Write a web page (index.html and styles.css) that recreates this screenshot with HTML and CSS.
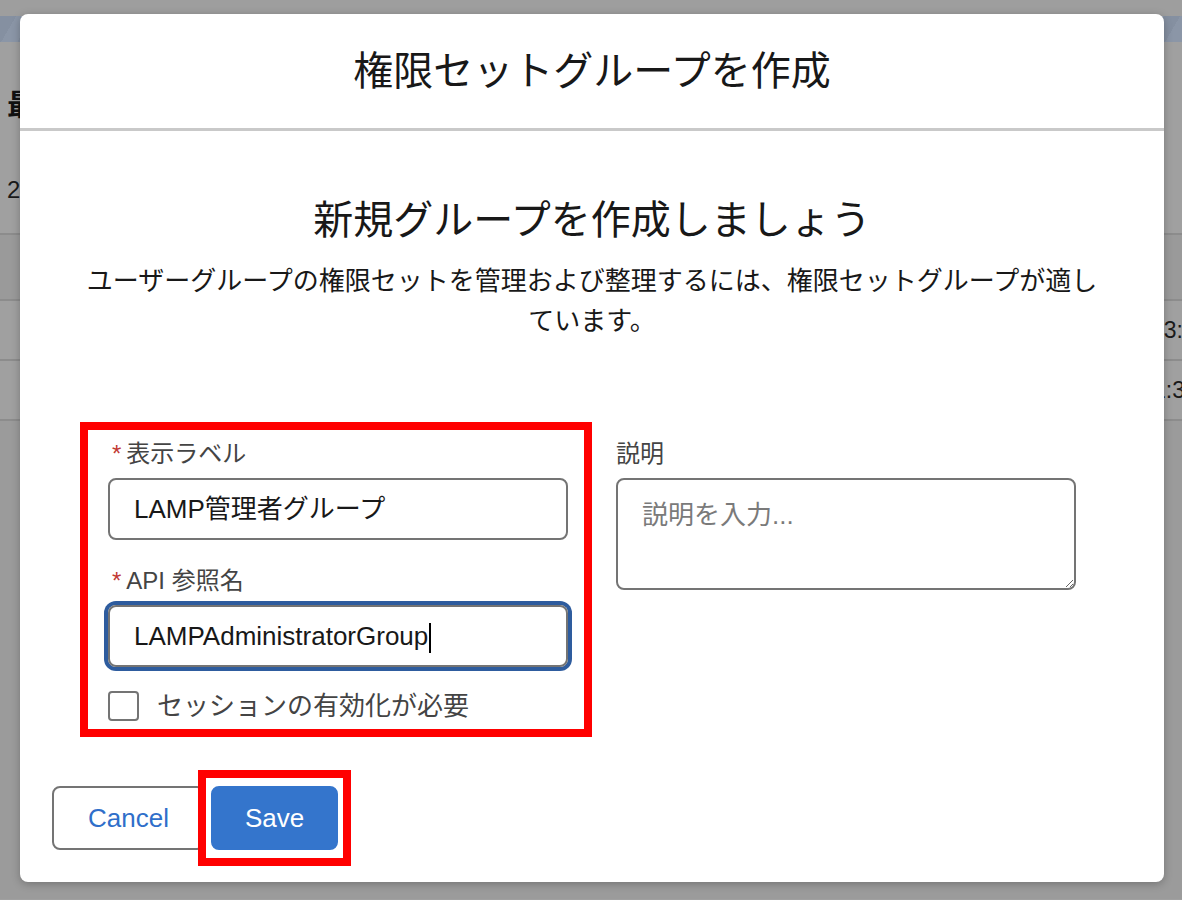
FILE: index.html
```html
<!DOCTYPE html>
<html lang="ja">
<head>
    <meta charset="UTF-8">
    <title>権限セットグループを作成</title>
    <link rel="stylesheet" href="styles.css">
</head>
<body>
    <!-- 後ろのページ (オーバーレイで暗くなっている) -->
    <div class="page">
      <div class="page-top"></div>
      <div class="page-band"></div>
      <h1 class="page-title">最近参照した権限セットグループ</h1>
      <p class="page-count">2 個の項目</p>
      <div class="page-table">
        <div class="row row-head"><span class="cell-main"></span><span class="cell-time"></span></div>
        <div class="row"><span class="cell-main"></span><span class="cell-time">13:45</span></div>
        <div class="row row-late"><span class="cell-main"></span><span class="cell-time">1:30</span></div>
        <div class="row"></div>
      </div>
    </div>

    <!-- モーダル -->
    <div class="modal">
      <header class="modal-header">
        <h2 class="modal-title">権限セットグループを作成</h2>
      </header>

      <div class="modal-body">
        <h3 class="intro-title">新規グループを作成しましょう</h3>
        <p class="intro-text">ユーザーグループの権限セットを管理および整理するには、権限セットグループが適しています。</p>

        <div class="form-grid">
          <div class="form-col marked">
            <div class="field">
              <label class="field-label"><abbr class="req">*</abbr>表示ラベル</label>
              <div class="input">LAMP管理者グループ</div>
            </div>
            <div class="field">
              <label class="field-label"><abbr class="req">*</abbr>API 参照名</label>
              <div class="input focused">LAMPAdministratorGroup<span class="caret"></span></div>
            </div>
            <div class="check-row">
              <span class="checkbox"></span>
              <span class="check-label">セッションの有効化が必要</span>
            </div>
          </div>

          <div class="form-col">
            <div class="field">
              <label class="field-label">説明</label>
              <textarea class="textarea" placeholder="説明を入力..."></textarea>
            </div>
          </div>
        </div>
      </div>

      <footer class="modal-footer">
        <button class="btn btn-neutral">Cancel</button>
        <span class="save-mark"><button class="btn btn-brand">Save</button></span>
      </footer>
    </div>
</body>
</html>
```

FILE: styles.css
```css
 *{
    box-sizing: border-box;
 }

 body{
    margin: 0;
    width: 1182px;
    height: 900px;
    overflow: hidden;
    background-color: #a0a0a0;
    font-family: "Liberation Sans", "Noto Sans CJK JP", sans-serif;
    color: #181818;
 }

 /* 後ろのページ */
 .page{
    position: relative;
    height: 900px;
    background-color: #a0a0a0;
 }
 .page-top{
    height: 16px;
    background-color: #9e9e9e;
 }
 .page-band{
    height: 26px;
    background: repeating-linear-gradient(120deg, #8590a1 0 14px, #8b96a7 14px 28px);
 }
 .page-title{
    margin: 43px 0 0;
    padding-left: 7px;
    font-size: 30px;
    line-height: 40px;
    font-weight: bold;
    color: #111;
    white-space: nowrap;
 }
 .page-count{
    margin: 50px 0 0;
    padding-left: 7px;
    font-size: 24px;
    line-height: 30px;
    color: #1a1a1a;
 }
 .page-table{
    margin-top: 28px;
 }
 .row{
    display: flex;
    align-items: center;
    height: 60px;
    border-top: 2px solid #8c8c8c;
    font-size: 23px;
    color: #1a1a1a;
 }
 .row-head{
    height: 66px;
    background-color: #9a9a9a;
 }
 .row:last-child{
    height: 480px;
    background-color: #9b9b9b;
 }
 .cell-main{
    flex: 1;
 }
 .cell-time{
    flex: 0 0 31px;
    min-width: 0;
    white-space: nowrap;
 }
 .row-late .cell-time{
    padding-left: 2px;
 }

 /* モーダル本体 : 後ろのページの上に重なる */
 .modal{
    position: absolute;
    top: 14px;
    left: 20px;
    width: 1144px;
    background-color: #fff;
    border-radius: 8px;
    box-shadow: 0 2px 8px rgba(0,0,0,.25);
 }

 .modal-header{
    padding: 32px 0;
    border-bottom: 3px solid #c9c9c9;
    text-align: center;
 }
 .modal-title{
    margin: 0;
    font-size: 40px;
    line-height: 50px;
    font-weight: normal;
 }

 .modal-body{
    padding-top: 64px;
 }
 .intro-title{
    margin: 0;
    text-align: center;
    font-size: 40px;
    line-height: 50px;
    font-weight: normal;
 }
 .intro-text{
    max-width: 1024px;
    margin: 16px auto 0;
    text-align: center;
    font-size: 26px;
    line-height: 40px;
 }

 /* フォーム 2カラム */
 .form-grid{
    display: grid;
    grid-template-columns: 1fr 1fr;
    column-gap: 48px;
    margin: 97px 88px 0;
    padding-bottom: 65px;
 }
 .form-col{
    display: flex;
    flex-direction: column;
    gap: 25px;
 }
 /* 赤枠 (注釈) */
 .marked{
    position: relative;
 }
 .marked::after{
    content: "";
    position: absolute;
    top: -16px;
    right: -24px;
    bottom: -16px;
    left: -28px;
    border: 8px solid #ff0000;
    pointer-events: none;
 }

 .field{
    display: flex;
    flex-direction: column;
 }
 .field-label{
    display: block;
    margin-bottom: 8px;
    font-size: 24px;
    line-height: 32px;
    color: #444;
 }
 .req{
    margin: 0 5px 0 4px;
    color: #c23934;
    text-decoration: none;
    font-size: 24px;
 }

 .input{
    height: 62px;
    padding: 0 24px;
    border: 2px solid #747474;
    border-radius: 8px;
    font-size: 26px;
    line-height: 58px;
    color: #181818;
    white-space: nowrap;
 }
 .input.focused{
    box-shadow: 0 0 0 4px #2e5c9e;
 }
 .caret{
    display: inline-block;
    width: 2px;
    height: 30px;
    margin-left: 1px;
    background-color: #000;
    vertical-align: middle;
 }

 .textarea{
    display: block;
    width: 100%;
    height: 112px;
    padding: 16px 24px;
    border: 2px solid #747474;
    border-radius: 8px;
    font-family: "Liberation Sans", "Noto Sans CJK JP", sans-serif;
    font-size: 26px;
    line-height: 39px;
    color: #181818;
 }
 .textarea::placeholder{
    color: #7a7a7a;
 }

 .check-row{
    display: flex;
    align-items: center;
    height: 30px;
    margin-top: -1px;
 }
 .checkbox{
    width: 31px;
    height: 30px;
    border: 2px solid #747474;
    border-radius: 4px;
 }
 .check-label{
    margin-left: 18px;
    font-size: 26px;
    line-height: 30px;
    color: #444;
 }

 /* フッター */
 .modal-footer{
    display: flex;
    gap: 6px;
    padding: 0 32px 32px;
 }
 .btn{
    height: 64px;
    padding: 0 33px;
    border: 2px solid #747474;
    border-radius: 8px;
    background-color: #fff;
    font-family: "Liberation Sans", sans-serif;
    font-size: 26px;
    line-height: 60px;
 }
 .btn-neutral{
    padding: 0 34px;
    color: #2f6fca;
 }
 .btn-brand{
    padding: 0 32px;
    border-color: #3475cc;
    background-color: #3475cc;
    color: #fff;
 }
 .save-mark{
    position: relative;
    display: inline-flex;
 }
 .save-mark::after{
    content: "";
    position: absolute;
    top: -16px;
    right: -13px;
    bottom: -16px;
    left: -13px;
    border: 8px solid #ff0000;
    pointer-events: none;
 }
```
